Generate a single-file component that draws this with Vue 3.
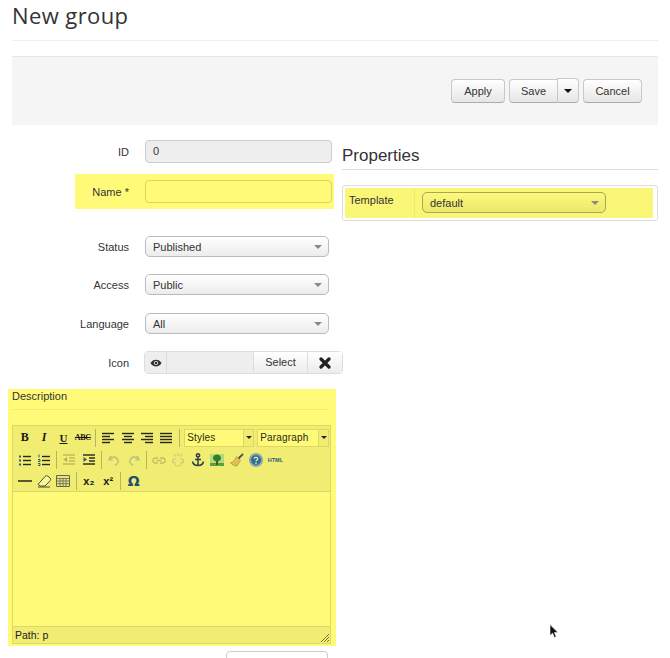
<template>
  <div class="page">
    <div class="page-header">
      <h1 class="page-title">New group</h1>
    </div>

    <div class="action-bar">
      <button class="btn btn-apply">Apply</button>
      <div class="btn-split">
        <button class="btn btn-save">Save</button>
        <button class="btn btn-caret"><span class="caret dark"></span></button>
      </div>
      <button class="btn btn-cancel">Cancel</button>
    </div>

    <div class="columns">
      <div class="left-col">
        <div class="row row-id">
          <label class="row-label">ID</label>
          <div class="fake-input disabled">0</div>
        </div>

        <div class="row-name">
          <label class="row-label">Name *</label>
          <div class="fake-input name-input"></div>
        </div>

        <div v-for="field in selectFields" :key="field.label" class="row" :class="field.cls">
          <label class="row-label">{{ field.label }}</label>
          <div class="select"><span>{{ field.value }}</span><span class="caret"></span></div>
        </div>

        <div class="row row-icon">
          <label class="row-label">Icon</label>
          <div class="icon-group">
            <span class="icon-eye">
              <svg viewBox="0 0 16 10" width="12" height="8">
                <path d="M0.5 5C3 1.2 5.5 0.5 8 0.5S13 1.2 15.5 5C13 8.8 10.5 9.5 8 9.5S3 8.8 0.5 5Z" fill="#333" />
                <circle cx="8" cy="5" r="2.8" fill="#eee" />
                <circle cx="8" cy="5" r="1.7" fill="#333" />
              </svg>
            </span>
            <span class="icon-value"></span>
            <span class="icon-select">Select</span>
            <span class="icon-clear">
              <svg viewBox="0 0 12 12" width="12" height="12">
                <path d="M2 2L10 10M10 2L2 10" stroke="#222" stroke-width="3.2" fill="none" stroke-linecap="round" />
              </svg>
            </span>
          </div>
        </div>

        <div class="description">
          <div class="desc-label">Description</div>
          <div class="editor">
            <div class="editor-toolbar">
              <div v-for="(toolRow, r) in toolbar" :key="r" class="tool-row">
                <template v-for="(tool, i) in toolRow" :key="i">
                  <span v-if="tool === '|'" class="tool-sep"></span>
                  <span v-else-if="tool.text" class="tool" :class="tool.cls">{{ tool.text }}</span>
                  <span v-else-if="tool.menu" class="tool-menu" :style="{ width: tool.width + 'px' }">
                    <span class="menu-text">{{ tool.menu }}</span>
                    <span class="menu-arrow"><span class="caret tiny"></span></span>
                  </span>
                  <span v-else class="tool" :class="{ off: tool.off }">
                    <svg viewBox="0 0 16 16" width="16" height="16">
                      <path
                        v-for="(p, k) in tool.paths"
                        :key="k"
                        :d="p.d"
                        :fill="p.fill || 'none'"
                        :stroke="p.stroke || 'none'"
                        :stroke-width="p.w || 1"
                      />
                    </svg>
                  </span>
                </template>
              </div>
            </div>
            <div class="editor-body"></div>
            <div class="editor-status">
              <span>Path: p</span>
              <svg class="grip" viewBox="0 0 10 10" width="10" height="10">
                <path d="M9 1L1 9M9 4L4 9M9 7L7 9" stroke="#77773a" stroke-width="1" fill="none" />
              </svg>
            </div>
          </div>
        </div>

        <div class="cut-button"></div>
      </div>

      <div class="right-col">
        <h2 class="props-title">Properties</h2>
        <div class="props-table">
          <div class="props-row">
            <div class="props-name">Template</div>
            <div class="props-value">
              <div class="select template-select"><span>default</span><span class="caret"></span></div>
            </div>
          </div>
        </div>
      </div>
    </div>

    <svg class="cursor" viewBox="0 0 10 15" width="10" height="15">
      <path d="M1 0.5V11.5L3.6 9.2L5.4 13.6L7.2 12.8L5.4 8.6H9Z" fill="#111" stroke="#fff" stroke-width="0.6" />
    </svg>
  </div>
</template>

<script setup>
const selectFields = [
  { label: 'Status', value: 'Published', cls: 'row-status' },
  { label: 'Access', value: 'Public', cls: 'row-access' },
  { label: 'Language', value: 'All', cls: 'row-language' }
]

const lines = (rows, w = 1.4, stroke = '#26261a') =>
  rows.map(([a, b, y]) => ({ d: `M${a} ${y}H${b}`, stroke, w }))

const alignIcon = (rows) => ({ paths: lines(rows) })

const listBullets = {
  paths: [
    { d: 'M2 3.5h2v2h-2zM2 7.5h2v2h-2zM2 11.5h2v2h-2z', fill: '#2d5a7a' },
    ...lines([[6, 14, 4.5], [6, 14, 8.5], [6, 14, 12.5]])
  ]
}

const listNumbers = {
  paths: [
    { d: 'M3 2.5v3M2 7.5h2v2h-2M2 11.5h2v2h-2', stroke: '#2d5a7a', w: 1 },
    ...lines([[6, 14, 4.5], [6, 14, 8.5], [6, 14, 12.5]])
  ]
}

const toolbar = [
  [
    { text: 'B', cls: 't-bold' },
    { text: 'I', cls: 't-italic' },
    { text: 'U', cls: 't-under' },
    { text: 'ABC', cls: 't-strike' },
    '|',
    alignIcon([[2, 14, 3.5], [2, 10, 6.5], [2, 14, 9.5], [2, 10, 12.5]]),
    alignIcon([[2, 14, 3.5], [4, 12, 6.5], [2, 14, 9.5], [4, 12, 12.5]]),
    alignIcon([[2, 14, 3.5], [6, 14, 6.5], [2, 14, 9.5], [6, 14, 12.5]]),
    alignIcon([[2, 14, 3.5], [2, 14, 6.5], [2, 14, 9.5], [2, 14, 12.5]]),
    '|',
    { menu: 'Styles', width: 70 },
    { menu: 'Paragraph', width: 72 }
  ],
  [
    listBullets,
    listNumbers,
    '|',
    {
      off: true,
      paths: [
        ...lines([[2, 14, 3], [8, 14, 6], [8, 14, 9], [2, 14, 12]], 1.2),
        { d: 'M6 5L2.5 7.5L6 10Z', fill: '#26261a' }
      ]
    },
    {
      paths: [
        ...lines([[2, 14, 3], [8, 14, 6], [8, 14, 9], [2, 14, 12]], 1.4),
        { d: 'M2.5 5L6 7.5L2.5 10Z', fill: '#2d5a7a' }
      ]
    },
    '|',
    { off: true, paths: [{ d: 'M5 4L3 7.5L6.5 8M3.5 7C6 4 11 4.5 12 8.5C12.4 10.5 11 12.5 9 13', stroke: '#4a6a80', w: 1.7 }] },
    { off: true, paths: [{ d: 'M11 4L13 7.5L9.5 8M12.5 7C10 4 5 4.5 4 8.5C3.6 10.5 5 12.5 7 13', stroke: '#4a6a80', w: 1.7 }] },
    '|',
    { off: true, paths: [{ d: 'M7 6H4.5a2.5 2.5 0 0 0 0 5H7M9 6h2.5a2.5 2.5 0 0 1 0 5H9M5.5 8.5h5', stroke: '#555', w: 1.3 }] },
    { off: true, paths: [{ d: 'M6 7H4.5a2 2 0 0 0 0 4H6M10 7h1.5a2 2 0 0 1 0 4H10M8 1v3M4 2l1.5 2.5M12 2l-1.5 2.5M8 15v-2M5 14l1-1.5M11 14l-1-1.5', stroke: '#777', w: 1.2 }] },
    { paths: [{ d: 'M8 5V14M5 7.5h6M2.5 9.5C3 12 5.5 13.5 8 13.5S13 12 13.5 9.5M8 1.8a1.6 1.6 0 1 0 .01 0', stroke: '#2a3f4e', w: 1.5 }] },
    {
      paths: [
        { d: 'M1 2h14v12H1z', fill: '#b4da7a' },
        { d: 'M1 11h14v3H1z', fill: '#4fa63f' },
        { d: 'M7 9h2v4H7z', fill: '#6b4520' },
        { d: 'M8 2.5a4 3.5 0 1 0 .01 0', fill: '#2f7d2f' }
      ]
    },
    {
      paths: [
        { d: 'M9.5 6.5L14 2', stroke: '#555', w: 2 },
        { d: 'M7.5 4.5L11.5 8.5L8 14C5.5 14 2.5 12.5 1.5 10.5C4 10.5 6 8 7.5 4.5Z', fill: '#e0c050', stroke: '#a88828', w: 0.6 }
      ]
    },
    {
      paths: [
        { d: 'M8 1a7 7 0 1 0 .01 0Z', fill: '#8fa5ad' },
        { d: 'M8 3a5 5 0 1 0 .01 0Z', fill: '#2f6f90' },
        { d: 'M6 6.5C6.3 5 9.8 5 9.8 6.8C9.8 8 8 8 8 9.6', stroke: '#e8e8c0', w: 1.3 },
        { d: 'M7.3 10.6h1.4v1.4H7.3z', fill: '#e8e8c0' }
      ]
    },
    { text: 'HTML', cls: 't-html' }
  ],
  [
    { paths: lines([[1, 15, 8]], 1.5) },
    {
      paths: [
        { d: 'M2 11.5L9 3.5C10 2.5 11 2.5 12 3.3L14 5C15 6 14.7 7 14 7.8L9 13H4.5Z', fill: '#fbf89a', stroke: '#4a4a3a', w: 1 },
        { d: 'M2 14H14', stroke: '#4a4a3a', w: 1 }
      ]
    },
    {
      paths: [
        { d: 'M1.5 2.5h13v11h-13z', fill: '#e8e48a', stroke: '#66664a', w: 1 },
        { d: 'M1.5 5.5h13M1.5 8h13M1.5 10.7h13M5 5.5v8M8 5.5v8M11 5.5v8', stroke: '#66664a', w: 0.8 }
      ]
    },
    '|',
    { text: 'x₂', cls: 't-script' },
    { text: 'x²', cls: 't-script' },
    '|',
    { text: 'Ω', cls: 't-omega' }
  ]
]
</script>

<style>
html,
body {
  margin: 0;
  background: #fff;
}
</style>

<style scoped>
.page {
  position: relative;
  width: 670px;
  height: 658px;
  overflow: hidden;
  padding: 0 12px;
  box-sizing: border-box;
  background: #fff;
  color: #333;
  font-family: "Liberation Sans", Arial, sans-serif;
  font-size: 11px;
}

.page-header {
  width: 646px;
  height: 40px;
  border-bottom: 1px solid #eee;
}

.page-title {
  margin: 0;
  padding-top: 1px;
  font-family: "Open Sans", sans-serif;
  font-size: 22px;
  line-height: 28px;
  font-weight: 400;
  letter-spacing: 0.4px;
  color: #333;
}

.action-bar {
  width: 646px;
  height: 69px;
  margin-top: 15px;
  padding: 22px 16px 0 0;
  box-sizing: border-box;
  display: flex;
  justify-content: flex-end;
  align-items: flex-start;
  gap: 4px;
  background: #f5f5f5;
  border-top: 1px solid #e6e6e6;
}

.btn {
  height: 24px;
  padding: 0;
  box-sizing: border-box;
  border: 1px solid #c8c8c8;
  border-bottom-color: #aaa;
  border-radius: 4px;
  background: linear-gradient(#fff, #e6e6e6);
  color: #333;
  font-family: inherit;
  font-size: 11px;
}

.btn-apply { width: 54px; }
.btn-cancel { width: 59px; }

.btn-split {
  display: flex;
  align-items: flex-end;
  margin-top: -1px;
}

.btn-save {
  width: 48px;
  border-radius: 4px 0 0 4px;
  border-right: 0;
}

.btn-caret {
  width: 22px;
  height: 25px;
  border-radius: 0 4px 4px 0;
  display: flex;
  align-items: center;
  justify-content: center;
}

.caret {
  width: 0;
  height: 0;
  border-left: 4px solid transparent;
  border-right: 4px solid transparent;
  border-top: 4px solid #888;
}

.caret.dark {
  border-top-color: #111;
}

.caret.tiny {
  border-left-width: 3px;
  border-right-width: 3px;
  border-top: 3px solid #222;
}

.columns {
  display: flex;
}

.left-col {
  width: 330px;
  flex: none;
  padding-top: 15px;
}

.row {
  display: flex;
  align-items: center;
  gap: 16px;
}

.row-label {
  width: 117px;
  flex: none;
  text-align: right;
  color: #333;
}

.row-id { height: 23px; margin-bottom: 11px; }
.row-status { height: 21px; margin-bottom: 17px; }
.row-access { height: 21px; margin-bottom: 18px; }
.row-language { height: 21px; margin-bottom: 17px; }
.row-icon { height: 23px; margin-bottom: 15px; }

.fake-input {
  width: 187px;
  height: 23px;
  flex: none;
  box-sizing: border-box;
  padding: 0 7px;
  line-height: 21px;
  border: 1px solid #ccc;
  border-radius: 4px;
  font-size: 11px;
}

.fake-input.disabled {
  background: #eee;
}

.row-name {
  display: flex;
  align-items: center;
  gap: 16px;
  width: 259px;
  height: 35px;
  margin: 0 0 27px 63px;
  background: #fffb78;
}

.row-name .row-label {
  width: 54px;
}

.name-input {
  border-color: #d8d45c;
  background: #fffb78;
}

.select {
  width: 184px;
  height: 21px;
  flex: none;
  box-sizing: border-box;
  padding: 0 6px 0 7px;
  display: flex;
  align-items: center;
  justify-content: space-between;
  border: 1px solid #bbb;
  border-radius: 5px;
  background: linear-gradient(#fff, #ececec);
  color: #333;
  font-size: 11px;
}

.icon-group {
  display: flex;
  width: 199px;
  height: 23px;
  margin-left: -1px;
  box-sizing: border-box;
  border: 1px solid #ddd;
  border-radius: 4px;
  flex: none;
}

.icon-eye {
  width: 22px;
  flex: none;
  display: flex;
  align-items: center;
  justify-content: center;
  background: #eee;
  border-right: 1px solid #ddd;
  box-sizing: border-box;
}

.icon-value {
  width: 86px;
  flex: none;
  background: #eee;
}

.icon-select {
  width: 54px;
  flex: none;
  text-align: center;
  line-height: 21px;
  box-sizing: border-box;
  border-left: 1px solid #ddd;
  background: linear-gradient(#fff, #ececec);
}

.icon-clear {
  flex: 1;
  display: flex;
  align-items: center;
  justify-content: center;
  border-left: 1px solid #ddd;
  background: linear-gradient(#fff, #ececec);
}

.description {
  width: 328px;
  height: 257px;
  margin-left: -4px;
  padding: 0 5px 0 4px;
  box-sizing: border-box;
  background: #fffb78;
}

.desc-label {
  width: 316px;
  height: 20px;
  line-height: 15px;
  border-bottom: 1px solid #f1ed6c;
  margin-bottom: 15px;
  color: #333;
}

.editor {
  width: 319px;
  height: 219px;
  box-sizing: border-box;
  display: flex;
  flex-direction: column;
  border: 1px solid #dcd868;
}

.editor-toolbar {
  height: 66px;
  box-sizing: border-box;
  padding: 1px 0 0 2px;
  background: #f1ec72;
  border-bottom: 1px solid #dcd868;
  flex: none;
}

.tool-row {
  display: flex;
  align-items: center;
  height: 21.7px;
}

.tool {
  width: 19.4px;
  height: 18px;
  flex: none;
  display: flex;
  align-items: center;
  justify-content: center;
  color: #1a1a12;
}

.tool.off {
  opacity: 0.3;
}

.tool-sep {
  width: 1px;
  height: 18px;
  flex: none;
  margin: 0 2.5px;
  background: #b8b45c;
}

.t-bold {
  font-family: "Liberation Serif", serif;
  font-weight: 700;
  font-size: 12px;
}

.t-italic {
  font-family: "Liberation Serif", serif;
  font-weight: 700;
  font-style: italic;
  font-size: 12px;
}

.t-under {
  font-family: "Liberation Serif", serif;
  font-weight: 700;
  font-size: 11px;
  text-decoration: underline;
}

.t-strike {
  font-family: "Liberation Serif", serif;
  font-weight: 700;
  font-size: 8px;
  text-decoration: line-through;
  letter-spacing: -0.3px;
}

.t-html {
  font-size: 5.5px;
  font-weight: 700;
  color: #2d5a7a;
}

.t-script {
  font-family: "Liberation Sans", sans-serif;
  font-weight: 700;
  font-size: 11px;
}

.t-omega {
  font-family: "DejaVu Sans", sans-serif;
  font-size: 14px;
  color: #23506e;
  font-weight: 700;
}

.tool-menu {
  height: 18px;
  flex: none;
  box-sizing: border-box;
  display: flex;
  margin: 0 1px 0 2px;
  border: 1px solid #dcd868;
  background: #fffb78;
}

.menu-text {
  flex: 1;
  padding-left: 2px;
  line-height: 16px;
  font-size: 10px;
  color: #2a2a1a;
  letter-spacing: 0.2px;
}

.menu-arrow {
  width: 9px;
  display: flex;
  align-items: center;
  justify-content: center;
  background: #f1ec72;
  border-left: 1px solid #dcd868;
}

.editor-body {
  flex: 1;
  background: #fffb78;
}

.editor-status {
  height: 17px;
  flex: none;
  position: relative;
  box-sizing: border-box;
  padding-left: 2px;
  line-height: 16px;
  font-size: 10.5px;
  color: #222;
  background: #f1ec72;
  border-top: 1px solid #dcd868;
}

.grip {
  position: absolute;
  right: 0;
  bottom: 0;
}

.cut-button {
  width: 102px;
  height: 20px;
  margin: 5px 0 0 214px;
  box-sizing: border-box;
  border: 1px solid #ccc;
  border-radius: 4px 4px 0 0;
}

.right-col {
  width: 316px;
  flex: none;
  padding-top: 15px;
}

.props-title {
  margin: 0 0 15px;
  height: 30px;
  line-height: 31px;
  box-sizing: border-box;
  border-bottom: 1px solid #ddd;
  font-size: 17px;
  font-weight: 400;
  color: #333;
}

.props-table {
  height: 36px;
  box-sizing: border-box;
  padding: 2px 4px 1px 2px;
  border: 1px solid #ddd;
  border-radius: 3px;
}

.props-row {
  display: flex;
  height: 30px;
  background: #faf677;
}

.props-name {
  width: 70px;
  flex: none;
  box-sizing: border-box;
  padding: 6px 0 0 4px;
  line-height: 13px;
  border-right: 1px solid #eeea70;
}

.props-value {
  padding: 4px 0 0 7px;
}

.template-select {
  border-color: #a8a458;
  background: linear-gradient(#fdf97a, #ece86e);
}

.cursor {
  position: absolute;
  left: 549px;
  top: 624px;
}
</style>
